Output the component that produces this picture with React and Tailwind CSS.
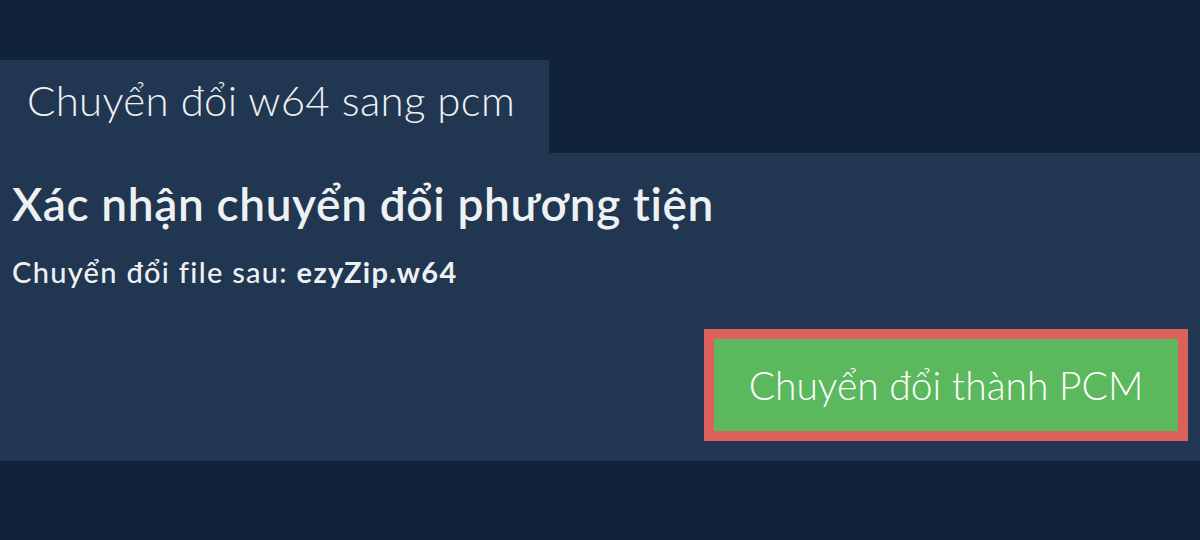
export default function App() {
  return (
    <div className="min-h-[540px] bg-[#10233a] pt-[60px] font-['Lato','Noto_Sans',sans-serif] text-[#eef1f4]">
      <div className="w-[549px] h-[93px] bg-[#213650] pl-[27px] pt-[19px]">
        <h1 className="text-[42px] font-light leading-none tracking-[0.3px]">Chuyển đổi w64 sang pcm</h1>
      </div>
      <div className="bg-[#213650] h-[308px] px-3 pt-[28px]">
        <h2 className="text-[46px] font-semibold leading-none tracking-[0.65px]">Xác nhận chuyển đổi phương tiện</h2>
        <p className="mt-[30px] text-[29px] font-medium leading-none tracking-[1.3px]">
          Chuyển đổi file sau: <span className="font-bold">ezyZip.w64</span>
        </p>
        <div className="flex justify-end mt-[43px]">
          <button className="border-[10px] border-[#dc605c] bg-[#5cb85c] h-[112px] w-[484px] text-[39px] font-light text-white leading-none">
            Chuyển đổi thành PCM
          </button>
        </div>
      </div>
    </div>
  );
}
